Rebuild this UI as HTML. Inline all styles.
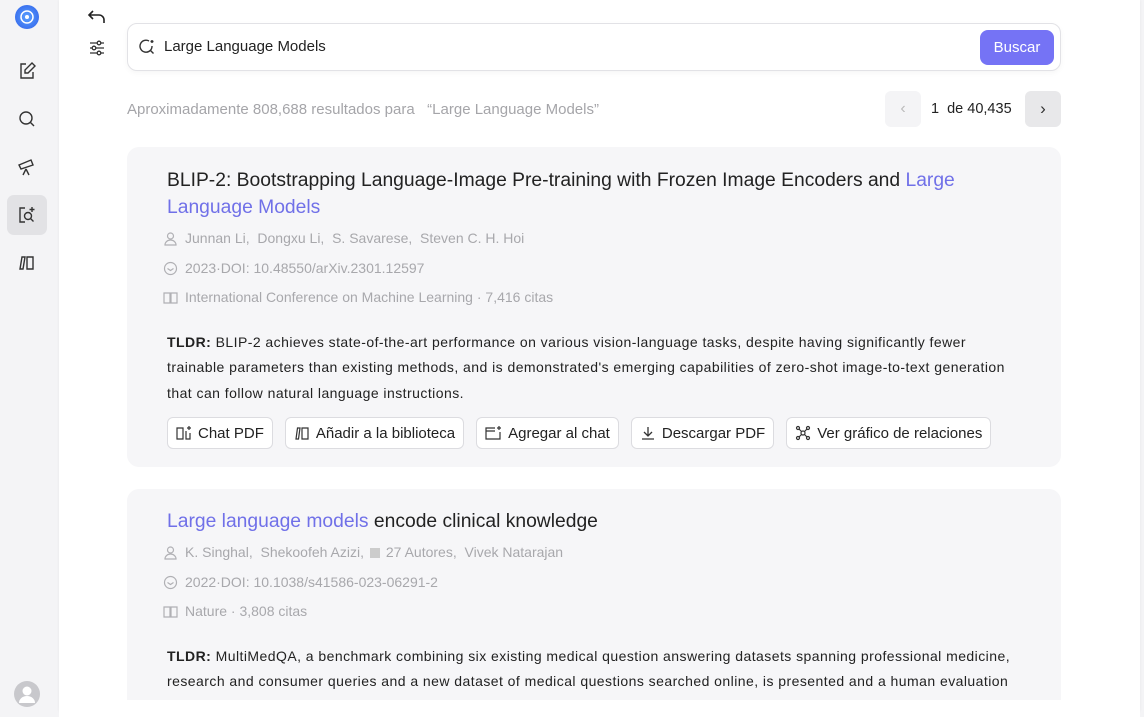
<!DOCTYPE html>
<html><head><meta charset="utf-8"><style>
*{box-sizing:border-box;margin:0;padding:0}
html,body{width:1144px;height:717px;overflow:hidden}
body{background:#f4f4f6;font-family:"Liberation Sans",sans-serif;position:relative;color:#222}
.side{position:absolute;left:0;top:0;width:58px;height:717px;background:#f4f4f6}
.main{position:absolute;left:59px;top:0;width:1081px;height:717px;background:#fff;border-radius:0 0 10px 10px;box-shadow:0 0 3px rgba(0,0,0,.06)}
.ic{position:absolute;left:17px;width:20px;height:20px}
.abs{position:absolute}
.search{position:absolute;left:127px;top:23px;width:934px;height:48px;border:1px solid #e2e2e6;border-radius:10px;background:#fff;box-shadow:0 2px 6px rgba(0,0,0,.04)}
.btn{position:absolute;right:6px;top:6px;width:74px;height:35px;background:#7573f5;color:#fff;border-radius:8px;font-size:15px;text-align:center;line-height:35px}
.card{position:absolute;left:127px;width:934px;background:#f6f6f8;border-radius:12px;padding:0 40px}
.t{font-size:19.3px;line-height:27px;color:#222}
.hl{color:#7070e8}
.meta{font-size:14px;color:#a8a8ac;height:29.5px;line-height:29.5px;display:flex;align-items:center;margin-left:-4px}
.meta svg{margin-right:7px}
.tl{font-size:14px;letter-spacing:0.45px;line-height:25.5px;color:#222}
.b{display:inline-flex;align-items:center;height:32px;border:1px solid #dcdce0;border-radius:6px;background:#fff;padding:0 8px;font-size:15px;margin-right:12px;color:#222}
.b svg{margin-right:6px}
</style></head><body>
<div class="side">
<div class="abs" style="left:15px;top:5px;width:24px;height:24px;border-radius:50%;background:radial-gradient(circle,#5aa0ff,#2f5fe8);"><svg width="24" height="24" viewBox="0 0 24 24"><circle cx="12" cy="12" r="6" fill="none" stroke="#fff" stroke-width="1.5"/><circle cx="12" cy="12" r="2" fill="#fff"/></svg></div>
<svg class="ic" style="top:61px" viewBox="0 0 20 20" fill="none" stroke="#333" stroke-width="1.4"><path d="M9 3H4v14h12v-6"/><path d="M15 2l3 3-7 7H8V9z"/></svg>
<svg class="ic" style="top:109px" viewBox="0 0 20 20" fill="none" stroke="#333" stroke-width="1.4"><circle cx="9" cy="9" r="6"/><path d="M13.5 13.5l3.5 3.5"/></svg>
<svg class="ic" style="top:157px" viewBox="0 0 20 20" fill="none" stroke="#333" stroke-width="1.4"><path d="M2 8l12-5 2 5-12 4z"/><path d="M9 12l-3 6M9 12l3 6"/></svg>
<div class="abs" style="left:7px;top:195px;width:40px;height:40px;background:#e2e2e5;border-radius:7px"></div>
<svg class="ic" style="top:205px" viewBox="0 0 20 20" fill="none" stroke="#333" stroke-width="1.4"><path d="M8 3H3v14h5"/><circle cx="11" cy="11" r="3.5"/><path d="M13.5 13.5l3 3M15 2v5M12.5 4.5h5"/></svg>
<svg class="ic" style="top:253px" viewBox="0 0 20 20" fill="none" stroke="#333" stroke-width="1.4"><path d="M3 16l2-12h3l-2 12zM10 4h6v12h-6z"/></svg>
<div class="abs" style="left:14px;top:681px;width:26px;height:26px;border-radius:50%;background:#c8c8cc"><svg width="26" height="26" viewBox="0 0 26 26" fill="#fff"><circle cx="13" cy="10" r="4.5"/><path d="M5 22a8 7 0 0 1 16 0z"/></svg></div>
</div>
<div class="main"></div>
<svg class="abs" style="left:87px;top:8px" width="20" height="18" viewBox="0 0 20 18" fill="none" stroke="#222" stroke-width="1.6"><path d="M6 3L2 7l4 4M2 7h10a5 5 0 0 1 5 5v3"/></svg>
<svg class="abs" style="left:88px;top:39px" width="18" height="18" viewBox="0 0 18 18" fill="none" stroke="#333" stroke-width="1.3"><path d="M2 4h14M2 9h14M2 14h14"/><circle cx="11" cy="4" r="1.8" fill="#fff"/><circle cx="6" cy="9" r="1.8" fill="#fff"/><circle cx="11" cy="14" r="1.8" fill="#fff"/></svg>
<div class="search">
<svg class="abs" style="left:11px;top:15px" width="16" height="16" viewBox="0 0 16 16" fill="none" stroke="#333" stroke-width="1.4"><path d="M13 7a6 6 0 1 1-3-5"/><path d="M11.5 11.5l3 3"/><path d="M13 1v3M11.5 2.5h3"/></svg>
<div class="abs" style="left:36px;top:14px;font-size:15px;color:#222">Large Language Models</div>
<div class="btn">Buscar</div>
</div>
<div class="abs" style="left:127px;top:101px;font-size:15px;color:#a5a5a9">Aproximadamente 808,688 resultados para &nbsp;&nbsp;“Large Language Models”</div>
<div class="abs" style="left:885px;top:91px;width:36px;height:36px;background:#f4f4f6;border-radius:6px;color:#bbb;text-align:center;line-height:36px;font-size:16px">&lsaquo;</div>
<div class="abs" style="left:931px;top:101px;font-size:14.5px;color:#222">1 &nbsp;de 40,435</div>
<div class="abs" style="left:1025px;top:91px;width:36px;height:36px;background:#e8e8ea;border-radius:6px;color:#333;text-align:center;line-height:36px;font-size:17px">&rsaquo;</div>

<div class="card" style="top:147px;height:320px">
<div class="t" style="margin-top:20px">BLIP-2: Bootstrapping Language-Image Pre-training with Frozen Image Encoders and <span class="hl">Large Language Models</span></div>
<div style="height:3px"></div>
<div class="meta"><svg width="15" height="15" viewBox="0 0 15 15" fill="none" stroke="#b0b0b4" stroke-width="1.2"><circle cx="7.5" cy="5" r="3"/><path d="M2 14a5.5 5 0 0 1 11 0z"/></svg>Junnan Li,&nbsp; Dongxu Li,&nbsp; S. Savarese,&nbsp; Steven C. H. Hoi</div>
<div class="meta"><svg width="15" height="15" viewBox="0 0 15 15" fill="none" stroke="#b0b0b4" stroke-width="1.2"><circle cx="7.5" cy="7.5" r="6"/><path d="M4.5 7.5l3 2 3-2"/></svg>2023·DOI: 10.48550/arXiv.2301.12597</div>
<div class="meta"><svg width="15" height="15" viewBox="0 0 15 15" fill="none" stroke="#b0b0b4" stroke-width="1.2"><path d="M1 3h6v10H1zM8 3h6v10H8z"/></svg>International Conference on Machine Learning · 7,416 citas</div>
<div class="tl" style="margin-top:17px"><b>TLDR:</b> BLIP-2 achieves state-of-the-art performance on various vision-language tasks, despite having significantly fewer trainable parameters than existing methods, and is demonstrated's emerging capabilities of zero-shot image-to-text generation that can follow natural language instructions.</div>
<div style="margin-top:11px;display:flex">
<span class="b"><svg width="16" height="16" viewBox="0 0 16 16" fill="none" stroke="#333" stroke-width="1.2"><path d="M1 3h6v11H1zM7 14V3M10 6v8h4V8M13 1v4M11 3h4"/></svg>Chat PDF</span>
<span class="b"><svg width="16" height="16" viewBox="0 0 16 16" fill="none" stroke="#333" stroke-width="1.2"><path d="M2 14l1.5-11h2.5l-1.5 11zM8 3h6v11H8z"/></svg>Añadir a la biblioteca</span>
<span class="b"><svg width="17" height="16" viewBox="0 0 17 16" fill="none" stroke="#333" stroke-width="1.2"><path d="M10 3H1v11h14V7M1 6h9M14 1v4M12 3h4"/></svg>Agregar al chat</span>
<span class="b"><svg width="16" height="16" viewBox="0 0 16 16" fill="none" stroke="#333" stroke-width="1.3"><path d="M8 2v9M4 7l4 4 4-4M2 14h12"/></svg>Descargar PDF</span>
<span class="b"><svg width="16" height="16" viewBox="0 0 16 16" fill="none" stroke="#333" stroke-width="1.2"><circle cx="8" cy="8" r="2"/><circle cx="3" cy="3" r="1.5"/><circle cx="13" cy="3" r="1.5"/><circle cx="3" cy="13" r="1.5"/><circle cx="13" cy="13" r="1.5"/><path d="M4 4l2.5 2.5M12 4l-2.5 2.5M4 12l2.5-2.5M12 12l-2.5-2.5"/></svg>Ver gráfico de relaciones</span>
</div>
</div>

<div class="card" style="top:489px;height:240px">
<div class="t" style="margin-top:19px"><span class="hl">Large language models</span> encode clinical knowledge</div>
<div style="height:3px"></div>
<div class="meta"><svg width="15" height="15" viewBox="0 0 15 15" fill="none" stroke="#b0b0b4" stroke-width="1.2"><circle cx="7.5" cy="5" r="3"/><path d="M2 14a5.5 5 0 0 1 11 0z"/></svg>K. Singhal,&nbsp; Shekoofeh Azizi,&nbsp; <span style="display:inline-block;width:10px;height:10px;background:#ccc;margin:0 6px 0 2px"></span>27 Autores,&nbsp; Vivek Natarajan</div>
<div class="meta"><svg width="15" height="15" viewBox="0 0 15 15" fill="none" stroke="#b0b0b4" stroke-width="1.2"><circle cx="7.5" cy="7.5" r="6"/><path d="M4.5 7.5l3 2 3-2"/></svg>2022·DOI: 10.1038/s41586-023-06291-2</div>
<div class="meta"><svg width="15" height="15" viewBox="0 0 15 15" fill="none" stroke="#b0b0b4" stroke-width="1.2"><path d="M1 3h6v10H1zM8 3h6v10H8z"/></svg>Nature · 3,808 citas</div>
<div class="tl" style="margin-top:17px"><b>TLDR:</b> MultiMedQA, a benchmark combining six existing medical question answering datasets spanning professional medicine, research and consumer queries and a new dataset of medical questions searched online, is presented and a human evaluation</div>
</div>
<div class="abs" style="left:59px;top:700px;width:1081px;height:17px;background:#fff"></div>
</body></html>
